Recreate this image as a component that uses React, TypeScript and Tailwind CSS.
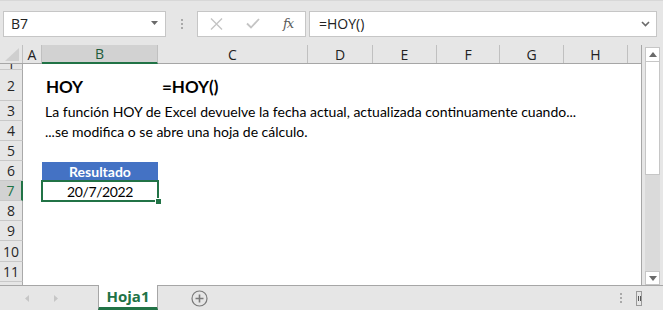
import React from 'react';

const COLS = [
  { l: 'A', w: 'w-[19px]', sel: false },
  { l: 'B', w: 'w-[116px]', sel: true },
  { l: 'C', w: 'w-[150px]', sel: false },
  { l: 'D', w: 'w-[65px]', sel: false },
  { l: 'E', w: 'w-[64px]', sel: false },
  { l: 'F', w: 'w-[63px]', sel: false },
  { l: 'G', w: 'w-[64px]', sel: false },
  { l: 'H', w: 'w-[64px]', sel: false },
];

function RowHead({ n, sel }: { n?: number; sel?: boolean }) {
  return (
    <div
      className={
        'w-[23px] shrink-0 flex items-center justify-center border-b border-b-[#c8c8c8] text-[14px] font-[\'Open_Sans\',sans-serif] ' +
        (sel
          ? 'bg-[#d2d2d2] border-r-2 border-r-[#217346] text-[#217346]'
          : 'bg-[#e6e6e6] border-r border-r-[#a9a9a9] text-[#262626]')
      }
    >
      {n}
    </div>
  );
}

function Row({ n, h, sel, children }: { n?: number; h: string; sel?: boolean; children?: React.ReactNode }) {
  return (
    <div className={'flex shrink-0 ' + h}>
      <RowHead n={n} sel={sel} />
      <div className="flex-1 flex items-center relative">{children}</div>
    </div>
  );
}

export default function App() {
  return (
    <div className="w-[663px] h-[310px] bg-[#e6e6e6] flex flex-col overflow-hidden font-['Open_Sans',sans-serif] select-none">
      {/* formula bar */}
      <div className="h-[45px] shrink-0 flex items-center pt-[1px] border-t border-t-[#d8d8d8]">
        <div className="ml-[3px] w-[163px] h-[26px] bg-white border border-[#c6c6c6] flex items-center pl-[7px] pr-[6px] text-[14px] text-[#222]">
          <span className="flex-1">B7</span>
          <svg width="8" height="5" viewBox="0 0 8 5"><path d="M0 0h7L3.5 4z" fill="#6a6a6a" /></svg>
        </div>
        <div className="w-[31px] flex flex-col items-center gap-[2px]">
          <div className="w-[2px] h-[2px] bg-[#a9a9a9]" />
          <div className="w-[2px] h-[2px] bg-[#a9a9a9]" />
          <div className="w-[2px] h-[2px] bg-[#a9a9a9]" />
        </div>
        <div className="w-[109px] h-[26px] bg-white border border-[#c6c6c6] flex items-center">
          <svg className="ml-[12px]" width="13" height="12" viewBox="0 0 13 12">
            <path d="M1 0.5l11 11M12 0.5l-11 11" stroke="#c4c4c4" strokeWidth="1.4" />
          </svg>
          <svg className="ml-[23px]" width="14" height="11" viewBox="0 0 14 11">
            <path d="M1 5.5l4 4 8-8.5" stroke="#c4c4c4" strokeWidth="1.8" fill="none" />
          </svg>
          <span className="ml-[23px] font-['DejaVu_Serif',serif] italic text-[13px] text-[#5a5a5a] tracking-[-1px]">fx</span>
        </div>
        <div className="ml-[3px] w-[348px] h-[26px] bg-white border border-[#c6c6c6] flex items-center pl-[9px] pr-[6px] text-[14px] text-[#222]">
          <span className="flex-1">=HOY()</span>
          <svg width="9" height="6" viewBox="0 0 9 6"><path d="M1 1l3.5 3.5L8 1" stroke="#6a6a6a" strokeWidth="1.6" fill="none" /></svg>
        </div>
      </div>

      {/* sheet + scrollbar */}
      <div className="flex-1 flex min-h-0">
        <div className="w-[642px] flex flex-col border-r border-r-[#a6a6a6] overflow-hidden">
          <div className="h-[19px] shrink-0 flex border-b border-b-[#a6a6a6] text-[14px] text-[#222]">
            <div className="w-[23px] shrink-0 flex items-end justify-end pr-[3px] pb-[2px] border-r border-r-[#c0c0c0]">
              <svg width="14" height="13" viewBox="0 0 14 13"><path d="M14 0v13H0z" fill="#cfcfcf" /></svg>
            </div>
            {COLS.map((c) => (
              <div
                key={c.l}
                className={
                  c.w +
                  ' shrink-0 flex items-center justify-center border-r border-r-[#c0c0c0] ' +
                  (c.sel ? 'bg-[#d2d2d2] border-b-2 border-b-[#217346] text-[#1e5c3a] -mb-[1px]' : '')
                }
              >
                {c.l}
              </div>
            ))}
            <div className="flex-1" />
          </div>

          <div className="flex-1 flex flex-col bg-white overflow-hidden font-['Lato',sans-serif] text-[14px] text-black">
            {/* row 1, mostly scrolled off */}
            <div className="flex h-[6px] shrink-0">
              <div className="w-[23px] shrink-0 bg-[#e6e6e6] border-r border-r-[#a9a9a9] border-b border-b-[#c8c8c8] flex flex-col justify-end overflow-hidden">
                <div className="h-[20px] shrink-0 flex items-center justify-center text-[14px] text-[#262626] font-['Open_Sans',sans-serif] translate-y-[4px]">1</div>
              </div>
            </div>
            <Row n={2} h="h-[31px]">
              <span className="ml-[23px] w-[116px] font-bold text-[17px] pt-[2px]">HOY</span>
              <span className="font-bold text-[17px] pt-[2px]">=HOY()</span>
            </Row>
            <Row n={3} h="h-[20px]">
              <span className="ml-[22px] whitespace-nowrap">La función HOY de Excel devuelve la fecha actual, actualizada continuamente cuando...</span>
            </Row>
            <Row n={4} h="h-[20px]">
              <span className="ml-[22px] whitespace-nowrap">...se modifica o se abre una hoja de cálculo.</span>
            </Row>
            <Row n={5} h="h-[20px]" />
            <Row n={6} h="h-[20px]">
              <div className="ml-[19px] w-[116px] h-[19px] mt-[1px] bg-[#4472c4] text-white font-bold flex items-center justify-center">Resultado</div>
            </Row>
            <Row n={7} h="h-[20px]" sel>
              <div className="ml-[19px] w-[116px] h-[20px] flex items-center justify-center relative">
                <span className="tracking-[-0.4px]">20/7/2022</span>
                <div className="absolute -left-[1px] -right-[1px] -top-[1px] -bottom-[1px] border-2 border-[#217346]" />
                <div className="absolute -right-[4px] -bottom-[4px] w-[7px] h-[7px] bg-[#217346] border border-white" />
              </div>
            </Row>
            <Row n={8} h="h-[20px]" />
            <Row n={9} h="h-[20px]" />
            <Row n={10} h="h-[21px]" />
            <Row n={11} h="h-[20px]" />
            <Row h="h-[20px]" />
          </div>
        </div>

        {/* vertical scrollbar */}
        <div className="ml-[3px] w-[15px] pt-[2px] flex flex-col">
          <div className="h-[15px] bg-white border border-[#c6c6c6] flex items-center justify-center">
            <svg width="8" height="5" viewBox="0 0 8 5"><path d="M0 5h8L4 0z" fill="#6a6a6a" /></svg>
          </div>
          <div className="h-[113px] bg-white border-x border-b border-[#c6c6c6]" />
          <div className="flex-1 bg-[#dadada]" />
          <div className="h-[14px] bg-white border border-[#c6c6c6] flex items-center justify-center">
            <svg width="8" height="5" viewBox="0 0 8 5"><path d="M0 0h8L4 5z" fill="#6a6a6a" /></svg>
          </div>
        </div>
      </div>

      {/* sheet tabs */}
      <div className="h-[25px] shrink-0 flex items-stretch border-t border-t-[#a6a6a6]">
        <div className="w-[98px] flex items-center">
          <svg className="ml-[25px]" width="4" height="7" viewBox="0 0 4 7"><path d="M4 0v7L0 3.5z" fill="#c6c6c6" /></svg>
          <svg className="ml-[25px]" width="4" height="7" viewBox="0 0 4 7"><path d="M0 0v7l4-3.5z" fill="#c6c6c6" /></svg>
        </div>
        <div className="w-[60px] -mt-[1px] bg-white border-x border-[#a6a6a6] border-b-[3px] border-b-[#217346] flex items-center justify-center font-bold text-[15px] text-[#217346] font-['Open_Sans',sans-serif]">
          Hoja1
        </div>
        <div className="ml-[33px] flex items-center">
          <svg width="17" height="17" viewBox="0 0 17 17">
            <circle cx="8.5" cy="8.5" r="7.5" stroke="#7a7a7a" strokeWidth="1.2" fill="none" />
            <path d="M8.5 4.5v8M4.5 8.5h8" stroke="#7a7a7a" strokeWidth="1.6" />
          </svg>
        </div>
        <div className="flex-1" />
        <div className="flex flex-col justify-center gap-[2px] mr-[14px]">
          <div className="w-[2px] h-[2px] bg-[#a9a9a9]" />
          <div className="w-[2px] h-[2px] bg-[#a9a9a9]" />
          <div className="w-[2px] h-[2px] bg-[#a9a9a9]" />
        </div>
        <div className="mr-[21px] flex items-center">
          <div className="w-[6px] h-[15px] border border-[#9a9a9a] flex items-center justify-center gap-[1px]">
            <div className="w-[1px] h-[5px] bg-[#555]" />
            <div className="w-[1px] h-[5px] bg-[#555]" />
          </div>
        </div>
      </div>
    </div>
  );
}
